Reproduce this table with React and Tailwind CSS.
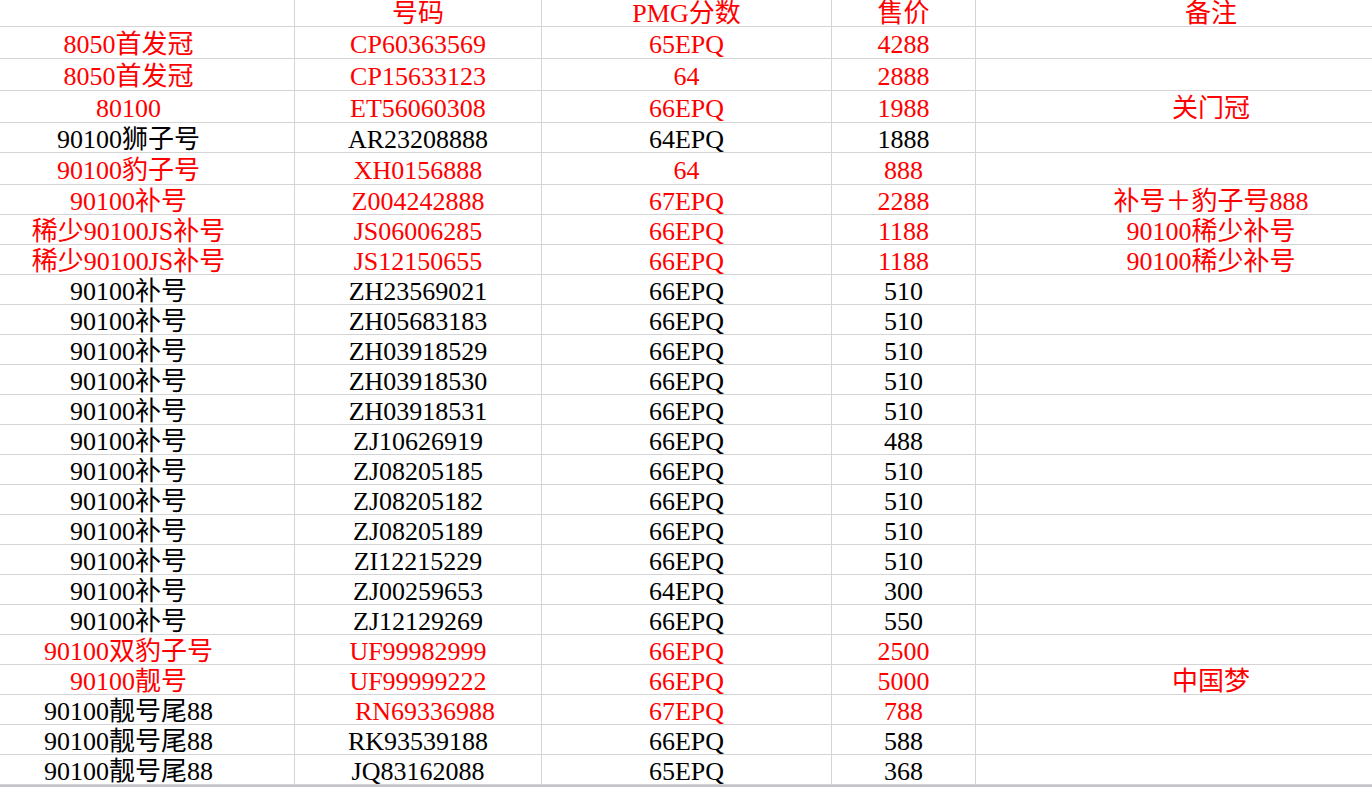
const R = "text-[#ff0000]";
const K = "text-black";

const rows = [
  { h: 32, c: [["8050首发冠", R], ["CP60363569", R], ["65EPQ", R], ["4288", R], ["", R]] },
  { h: 32, c: [["8050首发冠", R], ["CP15633123", R], ["64", R], ["2888", R], ["", R]] },
  { h: 32, c: [["80100", R], ["ET56060308", R], ["66EPQ", R], ["1988", R], ["关门冠", R]] },
  { h: 30, c: [["90100狮子号", K], ["AR23208888", K], ["64EPQ", K], ["1888", K], ["", K]] },
  { h: 32, c: [["90100豹子号", R], ["XH0156888", R], ["64", R], ["888", R], ["", R]] },
  { h: 30, c: [["90100补号", R], ["Z004242888", R], ["67EPQ", R], ["2288", R], ["补号＋豹子号888", R]] },
  { h: 30, c: [["稀少90100JS补号", R], ["JS06006285", R], ["66EPQ", R], ["1188", R], ["90100稀少补号", R]] },
  { h: 30, c: [["稀少90100JS补号", R], ["JS12150655", R], ["66EPQ", R], ["1188", R], ["90100稀少补号", R]] },
  { h: 30, c: [["90100补号", K], ["ZH23569021", K], ["66EPQ", K], ["510", K], ["", K]] },
  { h: 30, c: [["90100补号", K], ["ZH05683183", K], ["66EPQ", K], ["510", K], ["", K]] },
  { h: 30, c: [["90100补号", K], ["ZH03918529", K], ["66EPQ", K], ["510", K], ["", K]] },
  { h: 30, c: [["90100补号", K], ["ZH03918530", K], ["66EPQ", K], ["510", K], ["", K]] },
  { h: 30, c: [["90100补号", K], ["ZH03918531", K], ["66EPQ", K], ["510", K], ["", K]] },
  { h: 30, c: [["90100补号", K], ["ZJ10626919", K], ["66EPQ", K], ["488", K], ["", K]] },
  { h: 30, c: [["90100补号", K], ["ZJ08205185", K], ["66EPQ", K], ["510", K], ["", K]] },
  { h: 30, c: [["90100补号", K], ["ZJ08205182", K], ["66EPQ", K], ["510", K], ["", K]] },
  { h: 30, c: [["90100补号", K], ["ZJ08205189", K], ["66EPQ", K], ["510", K], ["", K]] },
  { h: 30, c: [["90100补号", K], ["ZI12215229", K], ["66EPQ", K], ["510", K], ["", K]] },
  { h: 30, c: [["90100补号", K], ["ZJ00259653", K], ["64EPQ", K], ["300", K], ["", K]] },
  { h: 30, c: [["90100补号", K], ["ZJ12129269", K], ["66EPQ", K], ["550", K], ["", K]] },
  { h: 30, c: [["90100双豹子号", R], ["UF99982999", R], ["66EPQ", R], ["2500", R], ["", R]] },
  { h: 30, c: [["90100靓号", R], ["UF99999222", R], ["66EPQ", R], ["5000", R], ["中国梦", R]] },
  { h: 30, c: [["90100靓号尾88", K], ["RN69336988", R, true], ["67EPQ", R], ["788", R], ["", K]] },
  { h: 30, c: [["90100靓号尾88", K], ["RK93539188", K], ["66EPQ", K], ["588", K], ["", K]] },
  { h: 30, c: [["90100靓号尾88", K], ["JQ83162088", K], ["65EPQ", K], ["368", K], ["", K]] },
];

const widths = ["w-[295px] pr-[37px]", "w-[247px]", "w-[290px]", "w-[144px]", "w-[471px]"];

function Row({ h, cells, header }) {
  const hc = h === 32 ? "h-[32px]" : h === 30 ? "h-[30px]" : "h-[27px]";
  return (
    <div className={`flex ${hc}`}>
      {cells.map(([t, color, shift], i) => (
        <div
          key={i}
          className={`${widths[i]} shrink-0 flex items-center justify-center border-r border-b border-[#d4d4d4] whitespace-nowrap ${color} ${shift ? "pl-[14px]" : ""} ${header ? "pt-[1px]" : "pt-[4px]"}`}
        >
          {t}
        </div>
      ))}
    </div>
  );
}

export default function App() {
  return (
    <div className="w-[1372px] h-[787px] overflow-hidden bg-white font-['Liberation_Serif','Noto_Sans_CJK_SC',serif] text-[26px] leading-none">
      <div className="w-[1500px]">
        <Row h={27} header cells={[["", R], ["号码", R], ["PMG分数", R], ["售价", R], ["备注", R]]} />
        {rows.map((r, i) => (
          <Row key={i} h={r.h} cells={r.c} />
        ))}
        <div className="h-[2px] bg-[#c4c4cc] w-[1372px]" />
      </div>
    </div>
  );
}
